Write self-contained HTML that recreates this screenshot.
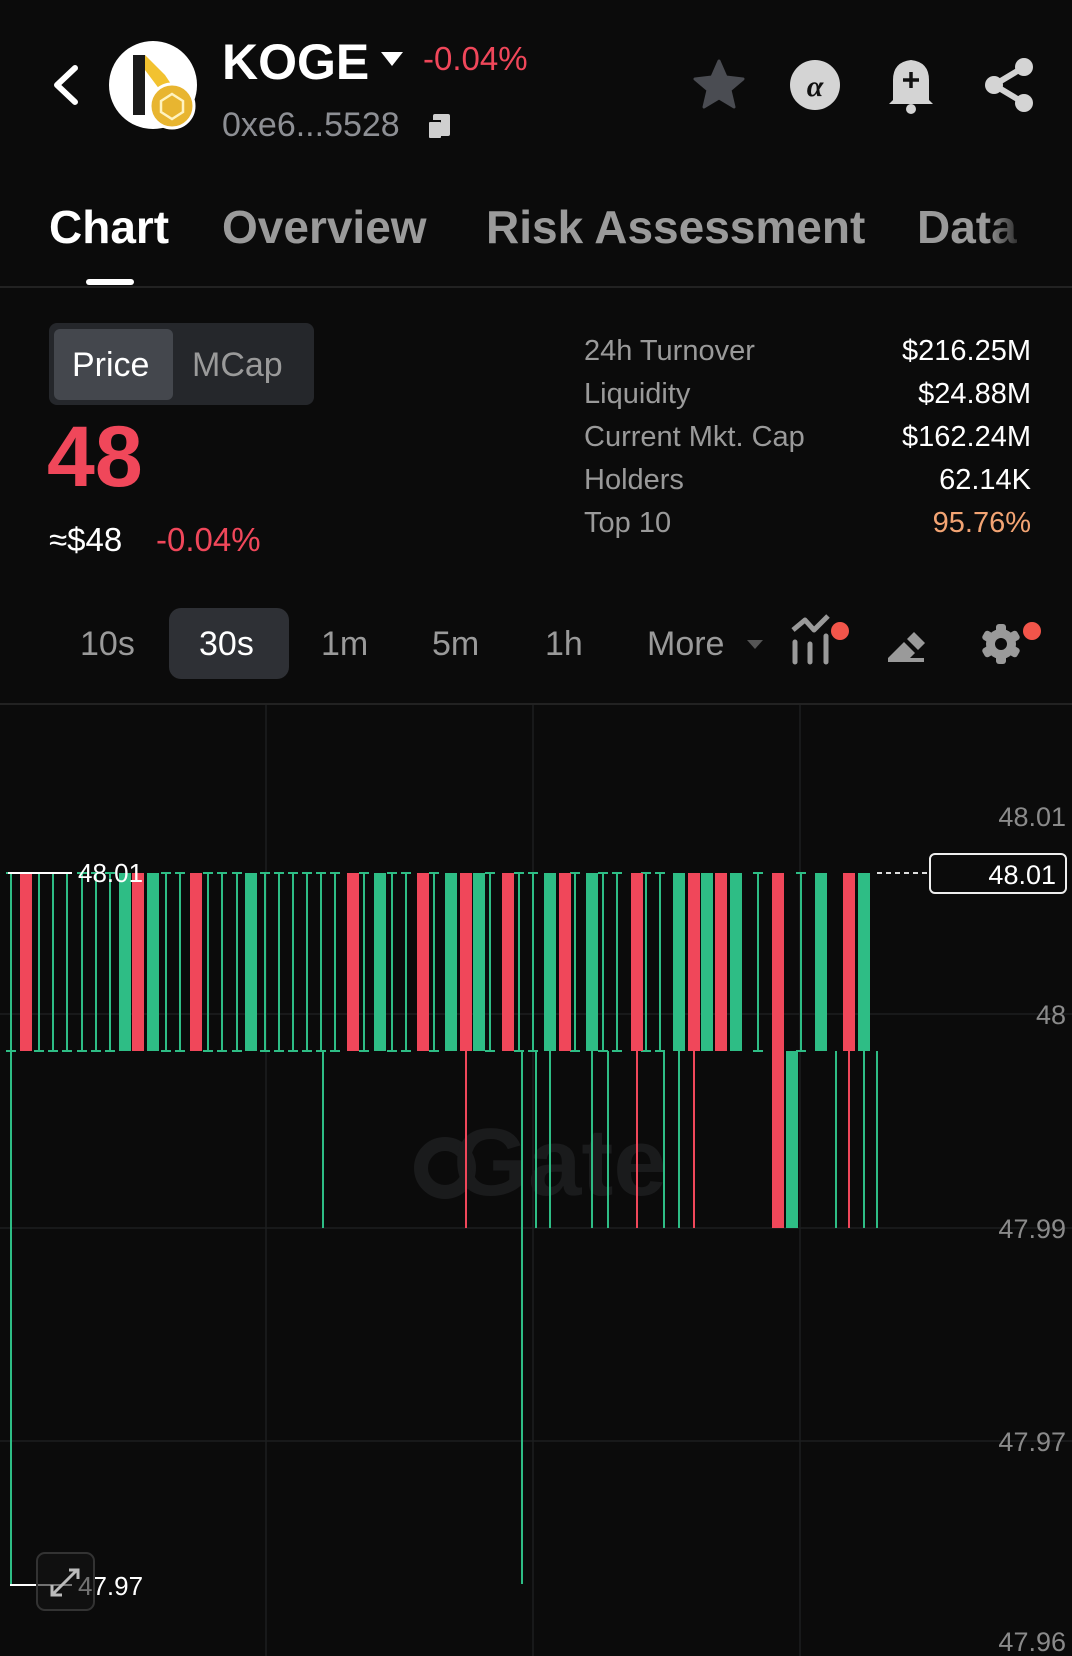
<!DOCTYPE html>
<html><head><meta charset="utf-8"><style>
*{margin:0;padding:0;box-sizing:border-box}
body{width:1072px;height:1656px;background:#0b0b0b;font-family:"Liberation Sans",sans-serif;position:relative;overflow:hidden;color:#fff}
.a{position:absolute;white-space:nowrap}
.g{color:#8d8f94}
</style></head><body>
<svg class="a" style="left:0;top:0" width="1072" height="300">
<path d="M75 68 L57 85 L75 102" stroke="#fff" stroke-width="6" fill="none" stroke-linecap="round" stroke-linejoin="round"/>
<circle cx="153" cy="85" r="44" fill="#fff"/>
<path d="M133 55 L145 55 L145 115 L133 115Z" fill="#1a1a1a"/>
<path d="M145 55 L165 75 L175 90 L160 90 L145 70Z" fill="#f2c230"/>
<circle cx="172" cy="106" r="22" fill="#e8b530" stroke="#fff" stroke-width="3"/>
<path d="M172 94 L183 101 L183 112 L172 119 L161 112 L161 101Z" fill="none" stroke="#fff3c0" stroke-width="2.5"/>
<path d="M381 52 L403 52 L392 66Z" fill="#fff"/>
<rect x="433" y="114" width="17" height="22" rx="2" fill="#cfcfcf"/><rect x="427" y="120" width="14" height="18" fill="#0b0b0b"/><rect x="429" y="122" width="12" height="16" rx="1" fill="#cfcfcf"/>
<path d="M719 61 L726 77 L743 79 L730 90 L734 107 L719 98 L704 107 L708 90 L695 79 L712 77Z" fill="#4a4c52" stroke="#4a4c52" stroke-width="3" stroke-linejoin="round"/>
<circle cx="815" cy="85" r="25" fill="#d4d4d4"/>
<text x="815" y="96" font-size="30" font-style="italic" font-weight="bold" fill="#111" text-anchor="middle" font-family="Liberation Serif">α</text>
<path d="M893 100 L893 80 Q893 62 911 60 Q929 62 929 80 L929 100 L933 104 L889 104Z" fill="#d4d4d4"/>
<circle cx="911" cy="109" r="5" fill="#d4d4d4"/>
<path d="M911 72 V88 M903 80 H919" stroke="#111" stroke-width="3.5"/>
<circle cx="1024" cy="67" r="9" fill="#d4d4d4"/><circle cx="994" cy="85" r="9" fill="#d4d4d4"/><circle cx="1024" cy="103" r="9" fill="#d4d4d4"/>
<path d="M1024 67 L994 85 L1024 103" stroke="#d4d4d4" stroke-width="6" fill="none"/>
<rect x="86" y="279" width="48" height="6" rx="3" fill="#fff"/>
<rect x="0" y="286" width="1072" height="2" fill="#222"/>
</svg>
<div class="a" style="left:222px;top:33px;font-size:50px;font-weight:bold">KOGE</div>
<div class="a" style="left:423px;top:40px;font-size:33px;color:#f0475a">-0.04%</div>
<div class="a g" style="left:222px;top:106px;font-size:34px">0xe6...5528</div>
<div class="a" style="left:49px;top:200px;font-size:46px;font-weight:bold">Chart</div>
<div class="a" style="left:222px;top:200px;font-size:46px;font-weight:bold;color:#9a9a9a">Overview</div>
<div class="a" style="left:486px;top:200px;font-size:46px;font-weight:bold;color:#9a9a9a">Risk Assessment</div>
<div class="a" style="left:917px;top:200px;font-size:46px;font-weight:bold;background:linear-gradient(90deg,#9a9a9a 70%,#333);-webkit-background-clip:text;color:transparent">Data</div>

<div class="a" style="left:49px;top:323px;width:265px;height:82px;background:#25272b;border-radius:8px"></div>
<div class="a" style="left:54px;top:329px;width:119px;height:71px;background:#44474d;border-radius:6px"></div>
<div class="a" style="left:72px;top:346px;font-size:34px">Price</div>
<div class="a g" style="left:192px;top:346px;font-size:34px;color:#9a9a9a">MCap</div>
<div class="a" style="left:47px;top:408px;font-size:86px;font-weight:bold;color:#f0475a">48</div>
<div class="a" style="left:49px;top:521px;font-size:33px">≈$48</div>
<div class="a" style="left:156px;top:521px;font-size:33px;color:#f0475a">-0.04%</div>

<div class="a g" style="left:584px;top:330px;font-size:29px;line-height:43px;color:#9a9a9a">24h Turnover<br>Liquidity<br>Current Mkt. Cap<br>Holders<br>Top 10</div>
<div class="a" style="right:41px;top:330px;font-size:29px;line-height:43px;text-align:right">$216.25M<br>$24.88M<br>$162.24M<br>62.14K<br><span style="color:#f3a473">95.76%</span></div>

<div class="a" style="left:169px;top:608px;width:120px;height:71px;background:#2e3035;border-radius:12px"></div>
<div class="a" style="left:80px;top:625px;font-size:34px;color:#9a9a9a">10s</div>
<div class="a" style="left:199px;top:625px;font-size:34px">30s</div>
<div class="a" style="left:321px;top:625px;font-size:34px;color:#9a9a9a">1m</div>
<div class="a" style="left:432px;top:625px;font-size:34px;color:#9a9a9a">5m</div>
<div class="a" style="left:545px;top:625px;font-size:34px;color:#9a9a9a">1h</div>
<div class="a" style="left:647px;top:625px;font-size:34px;color:#9a9a9a">More</div>
<svg class="a" style="left:0;top:600px" width="1072" height="110">
<path d="M747 40 L763 40 L755 49Z" fill="#555"/>
<path d="M793 30 L805 20 L814 30 L828 16" stroke="#9a9a9a" stroke-width="5" fill="none" stroke-linejoin="round"/>
<path d="M795 42 V62 M810 44 V62 M826 36 V62" stroke="#9a9a9a" stroke-width="5" stroke-linecap="round"/>
<circle cx="840" cy="31" r="9" fill="#f2554a"/>
<path d="M888 58 L904 42 L915 53 L906 62 L888 62Z M907 39 L914 32 L925 43 L918 50Z" fill="#9a9a9a"/>
<rect x="906" y="58" width="18" height="4" fill="#9a9a9a"/>
<circle cx="1001" cy="44" r="15" fill="#9a9a9a"/>
<g fill="#9a9a9a"><rect x="996" y="24" width="10" height="40" rx="3"/><rect x="996" y="24" width="10" height="40" rx="3" transform="rotate(60 1001 44)"/><rect x="996" y="24" width="10" height="40" rx="3" transform="rotate(120 1001 44)"/></g>
<circle cx="1001" cy="44" r="6" fill="#0b0b0b"/>
<circle cx="1032" cy="31" r="9" fill="#f2554a"/>
<rect x="0" y="703" width="1072" height="2" fill="#222" transform="translate(0,-600)"/>
</svg>

<svg id="ch" class="a" style="left:0;top:0" width="1072" height="1656">
<g stroke="#1c1e20" stroke-width="1.5">
<line x1="266" y1="705" x2="266" y2="1656"/><line x1="533" y1="705" x2="533" y2="1656"/><line x1="800" y1="705" x2="800" y2="1656"/>
<line x1="0" y1="1014" x2="1072" y2="1014"/><line x1="0" y1="1228" x2="1072" y2="1228"/><line x1="0" y1="1441" x2="1072" y2="1441"/>
</g>
<circle cx="445" cy="1168" r="24" fill="none" stroke="#1a1b1c" stroke-width="14"/>
<text x="560" y="1195" font-size="96" font-weight="bold" fill="#1a1b1c" text-anchor="middle" font-family="Liberation Sans">Gate</text>
<g id="cd"></g>
<g font-size="27" fill="#8a8a8a" text-anchor="end" font-family="Liberation Sans">
<text x="1066" y="826">48.01</text><text x="1066" y="1024">48</text><text x="1066" y="1238">47.99</text><text x="1066" y="1451">47.97</text><text x="1066" y="1651">47.96</text>
</g>
<line x1="877" y1="873" x2="929" y2="873" stroke="#ddd" stroke-width="2" stroke-dasharray="5,4"/>
<rect x="930" y="854" width="136" height="39" rx="5" fill="#0b0b0b" stroke="#eee" stroke-width="2"/>
<text x="1056" y="884" font-size="27" fill="#fff" text-anchor="end" font-family="Liberation Sans">48.01</text>
<line x1="8" y1="873" x2="72" y2="873" stroke="#fff" stroke-width="2"/>
<text x="78" y="882" font-size="26" fill="#fff" font-family="Liberation Sans">48.01</text>
<line x1="10" y1="1585" x2="72" y2="1585" stroke="#fff" stroke-width="2"/>
<text x="78" y="1595" font-size="26" fill="#fff" font-family="Liberation Sans">47.97</text>
<rect x="37" y="1553" width="57" height="57" rx="8" fill="rgba(20,20,20,0.6)" stroke="#333" stroke-width="2"/>
<path d="M53 1594 L77 1570 M69 1570 H78 V1579 M52 1585 V1595 H62" stroke="#bbb" stroke-width="3" fill="none"/>
</svg>
<script>
var G="#2ebd85",R="#f0475a",T=873,B=1051,L=1228;
var reds=[26,138,196,353,423,466,508,565,637,694,721,849],greens=[125,153,251,380,451,479,550,592,679,707,736,821,864];
var s='';
function occ(x){return reds.concat(greens,[778,792]).some(function(c){return Math.abs(c-x)<9});}
for(var x=11;x<=877;x+=14.1){var xx=Math.round(x);if(occ(xx))continue;
 s+='<line x1="'+xx+'" y1="'+T+'" x2="'+xx+'" y2="'+B+'" stroke="'+G+'" stroke-width="2"/>';
 s+='<line x1="'+(xx-5)+'" y1="'+T+'" x2="'+(xx+5)+'" y2="'+T+'" stroke="'+G+'" stroke-width="2"/>';
 s+='<line x1="'+(xx-5)+'" y1="'+B+'" x2="'+(xx+5)+'" y2="'+B+'" stroke="'+G+'" stroke-width="2"/>';}
reds.forEach(function(c){s+='<rect x="'+(c-6)+'" y="'+T+'" width="12" height="'+(B-T)+'" fill="'+R+'"/>';});
greens.forEach(function(c){s+='<rect x="'+(c-6)+'" y="'+T+'" width="12" height="'+(B-T)+'" fill="'+G+'"/>';});
s+='<rect x="772" y="'+T+'" width="12" height="'+(L-T)+'" fill="'+R+'"/>';
s+='<rect x="786" y="'+B+'" width="12" height="'+(L-B)+'" fill="'+G+'"/>';
[[11,1585,G],[522,1584,G],[323,L,G],[466,L,R],[536,L,G],[550,L,G],[592,L,G],[608,L,G],[637,L,R],[664,L,G],[679,L,G],[694,L,R],[836,L,G],[849,L,R],[864,L,G],[877,L,G]].forEach(function(w){
 s+='<line x1="'+w[0]+'" y1="'+B+'" x2="'+w[0]+'" y2="'+w[1]+'" stroke="'+w[2]+'" stroke-width="2"/>';});
document.getElementById('cd').innerHTML=s;
</script>
</body></html>
